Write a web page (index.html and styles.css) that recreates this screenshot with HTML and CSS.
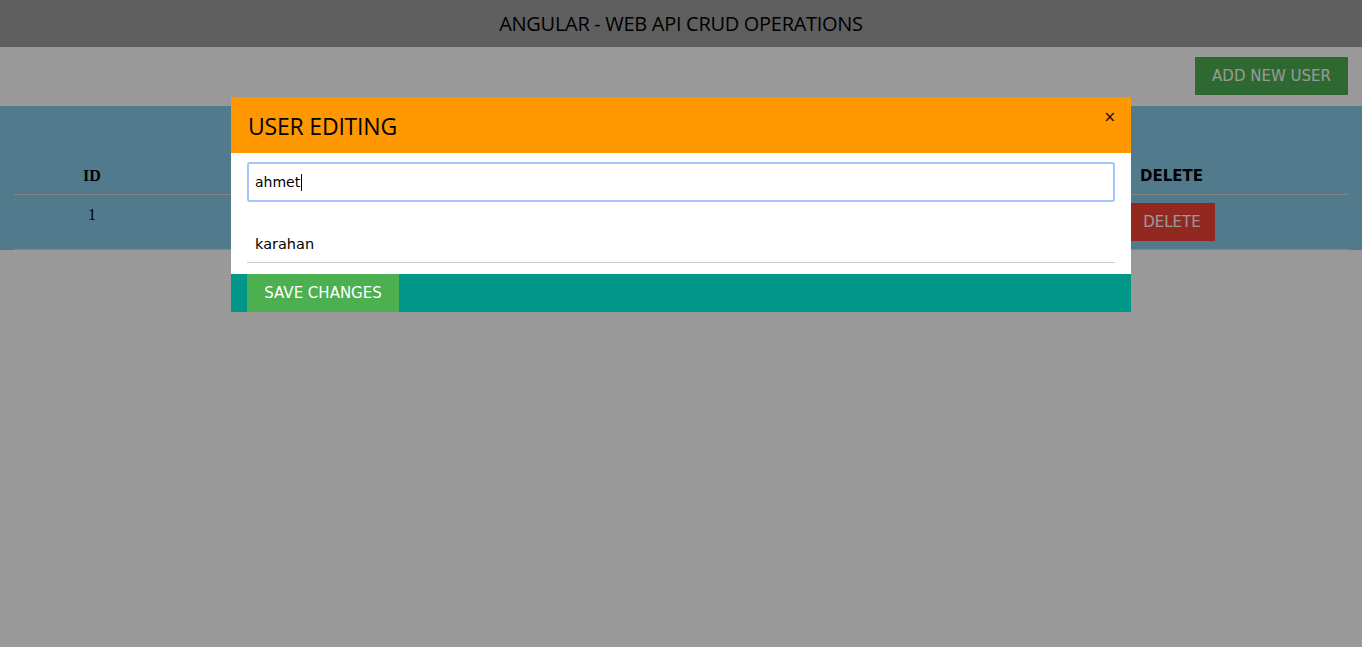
FILE: index.html
```html
<!DOCTYPE html>
<html lang="en">
<head>
<meta charset="utf-8">
<title>Angular - Web API CRUD Operations</title>
<link rel="stylesheet" href="styles.css">
</head>
<body>
<header class="topbar">
  <h1 class="topbar-title">ANGULAR - WEB API CRUD OPERATIONS</h1>
</header>
<div class="toolbar">
  <button class="btn btn-green">ADD NEW USER</button>
</div>
<section class="panel">
  <table class="users">
    <thead>
      <tr>
        <th class="col-id">ID</th>
        <th class="col-mid"></th>
        <th class="col-del">DELETE</th>
      </tr>
    </thead>
    <tbody>
      <tr>
        <td class="col-id">1</td>
        <td class="col-mid"></td>
        <td class="col-del"><button class="btn btn-red">DELETE</button></td>
      </tr>
    </tbody>
  </table>
</section>
<div class="overlay">
  <div class="modal">
    <div class="modal-head">
      <h3 class="modal-title">USER EDITING</h3>
      <span class="close">&times;</span>
    </div>
    <div class="modal-body">
      <div class="field focused" role="textbox">ahmet<span class="caret"></span></div>
      <input class="field line" type="text" value="karahan">
    </div>
    <div class="modal-foot">
      <button class="btn btn-save">SAVE CHANGES</button>
    </div>
  </div>
</div>
</body>
</html>
```
FILE: styles.css
```css
html, body {
  margin: 0;
  padding: 0;
  background: #fff;
  font-family: "DejaVu Sans", Verdana, sans-serif;
  font-size: 15px;
  line-height: 1.5;
  color: #000;
}

.topbar {
  background: #9e9e9e;
  height: 47px;
  display: flex;
  align-items: center;
  justify-content: center;
}

.topbar-title {
  margin: 0;
  font-family: "Open Sans", sans-serif;
  font-weight: 400;
  font-size: 20px;
  line-height: 28px;
  color: #000;
  letter-spacing: -0.3px;
}

.toolbar {
  display: flex;
  justify-content: flex-end;
  padding: 10px 14px 11px;
}

.btn {
  border: none;
  font-family: "DejaVu Sans", Verdana, sans-serif;
  font-size: 15px;
  line-height: 22px;
  padding: 8px 0;
  color: #fff;
  cursor: pointer;
  display: inline-block;
  text-align: center;
}

.btn-green { background: #4caf50; width: 153px; height: 38px; padding-top: 8px; }
.btn-red { background: #f44336; width: 85px; height: 38px; }

.panel {
  background: #87ceeb;
  padding: 50px 14px 0;
}

.users {
  width: 100%;
  border-collapse: collapse;
}

.users th, .users td {
  padding: 8px;
  text-align: center;
  vertical-align: top;
  border-bottom: 1px solid #ddd;
  line-height: 22px;
}

.users th {
  font-weight: bold;
  font-size: 15px;
  padding-top: 9px;
  padding-bottom: 7px;
}

.users .col-id {
  width: 140px;
  font-family: "Liberation Serif", serif;
  font-size: 16px;
}

.users td.col-id {
  padding-top: 9px;
}

.users .col-del {
  width: 336px;
}

.users td.col-del {
  padding-left: 9px;
}

.overlay {
  position: fixed;
  inset: 0;
  background: rgba(0, 0, 0, 0.4);
  display: flex;
  justify-content: center;
  align-items: flex-start;
  padding-top: 97px;
}

.modal {
  width: 900px;
  background: #fff;
}

.modal-head {
  background: #ff9800;
  height: 56px;
  display: flex;
  justify-content: space-between;
  align-items: flex-start;
  padding: 0 15px 0 17px;
  box-sizing: border-box;
}

.modal-title {
  margin: 0;
  font-family: "Open Sans", sans-serif;
  font-weight: 400;
  font-size: 23px;
  line-height: 58px;
  letter-spacing: -0.2px;
}

.close {
  font-size: 15px;
  line-height: 20px;
  padding-top: 10px;
  color: #111;
}

.modal-body {
  padding: 9px 16px 11px;
  display: flex;
  flex-direction: column;
}

.field {
  box-sizing: border-box;
  width: 100%;
  font-family: "DejaVu Sans", Verdana, sans-serif;
  font-size: 14px;
  padding: 8px;
  color: #000;
  background: #fff;
}

.focused {
  height: 40px;
  line-height: 22px;
  border: 2px solid #a4c5fb;
  border-radius: 3px;
  padding: 7px 6px;
  display: flex;
  align-items: center;
}

.caret {
  display: inline-block;
  width: 1px;
  height: 17px;
  background: #000;
  margin-left: 1px;
}

.line {
  margin-top: 21px;
  height: 40px;
  border: none;
  border-bottom: 1px solid #ccc;
  outline: none;
  font-size: 14.5px;
  padding-top: 9px;
  padding-bottom: 7px;
}

.modal-foot {
  background: #009688;
  padding: 0 16px;
  display: flex;
}

.btn-save {
  background: #4caf50;
  width: 152px;
  height: 38px;
}
```
